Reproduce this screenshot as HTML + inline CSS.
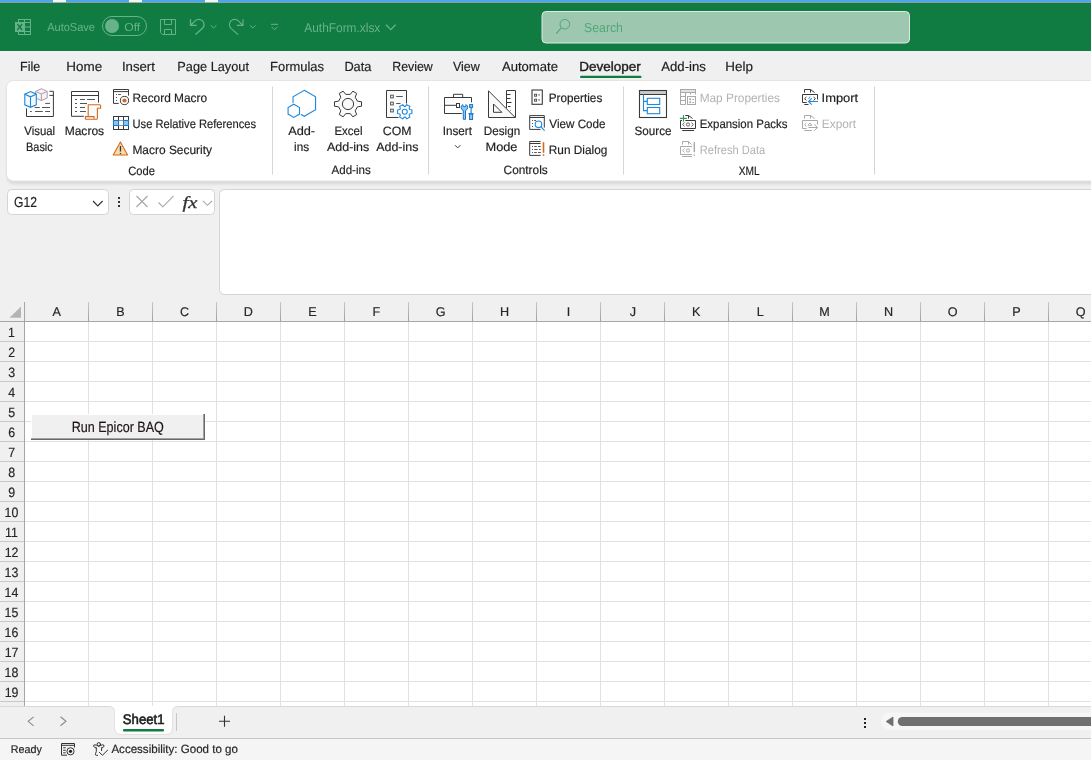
<!DOCTYPE html>
<html><head><meta charset="utf-8"><style>
html,body{margin:0;padding:0;width:1091px;height:760px;overflow:hidden;background:#F0F0F0;}
svg{display:block;will-change:transform;}
</style></head><body>
<svg width="1091" height="760" viewBox="0 0 1091 760" text-rendering="geometricPrecision">
<defs><linearGradient id="hsep" x1="0" y1="0" x2="0" y2="1"><stop offset="0" stop-color="#C8C8C8"/><stop offset="1" stop-color="#A0A0A0"/></linearGradient><linearGradient id="rsh" x1="0" y1="0" x2="0" y2="1"><stop offset="0" stop-color="#000" stop-opacity="0.09"/><stop offset="1" stop-color="#000" stop-opacity="0"/></linearGradient><filter id="blr" x="-5%" y="-20%" width="110%" height="140%"><feGaussianBlur stdDeviation="1.6"/></filter></defs>
<rect x="0" y="0" width="1091" height="760" fill="#F0F0F0"/>
<rect x="0" y="0" width="1091" height="2.2" fill="#4EA5EC"/>
<rect x="0" y="2.2" width="1091" height="1" fill="#7a8f88"/>
<rect x="53" y="0" width="13" height="2.2" fill="#F4F4F4"/>
<rect x="129" y="0" width="13" height="2.2" fill="#F4F4F4"/>
<rect x="205" y="0" width="13" height="2.2" fill="#F4F4F4"/>
<rect x="0" y="3" width="1091" height="48" fill="#107C41"/>
<rect x="7" y="84" width="1100" height="100" rx="7" fill="#000" opacity="0.10" filter="url(#blr)"/>
<rect x="6.5" y="80.5" width="1100" height="100.5" rx="7" fill="#FFFFFF" stroke="#E4E4E4" stroke-width="1"/>
<rect x="7.5" y="189.5" width="101" height="25" rx="4" fill="#FFFFFF" stroke="#D4D4D4"/>
<rect x="129.5" y="189.5" width="85" height="25" rx="4" fill="#FFFFFF" stroke="#D4D4D4"/>
<rect x="219.5" y="189.5" width="900" height="105" rx="5" fill="#FFFFFF" stroke="#D4D4D4"/>
<rect x="25" y="322" width="1066" height="384" fill="#FFFFFF"/>
<rect x="88" y="322" width="1" height="384" fill="#E1E1E1"/>
<rect x="152" y="322" width="1" height="384" fill="#E1E1E1"/>
<rect x="216" y="322" width="1" height="384" fill="#E1E1E1"/>
<rect x="280" y="322" width="1" height="384" fill="#E1E1E1"/>
<rect x="344" y="322" width="1" height="384" fill="#E1E1E1"/>
<rect x="408" y="322" width="1" height="384" fill="#E1E1E1"/>
<rect x="472" y="322" width="1" height="384" fill="#E1E1E1"/>
<rect x="536" y="322" width="1" height="384" fill="#E1E1E1"/>
<rect x="600" y="322" width="1" height="384" fill="#E1E1E1"/>
<rect x="664" y="322" width="1" height="384" fill="#E1E1E1"/>
<rect x="728" y="322" width="1" height="384" fill="#E1E1E1"/>
<rect x="792" y="322" width="1" height="384" fill="#E1E1E1"/>
<rect x="856" y="322" width="1" height="384" fill="#E1E1E1"/>
<rect x="920" y="322" width="1" height="384" fill="#E1E1E1"/>
<rect x="984" y="322" width="1" height="384" fill="#E1E1E1"/>
<rect x="1048" y="322" width="1" height="384" fill="#E1E1E1"/>
<rect x="1112" y="322" width="1" height="384" fill="#E1E1E1"/>
<rect x="25" y="341" width="1066" height="1" fill="#E1E1E1"/>
<rect x="25" y="361" width="1066" height="1" fill="#E1E1E1"/>
<rect x="25" y="381" width="1066" height="1" fill="#E1E1E1"/>
<rect x="25" y="401" width="1066" height="1" fill="#E1E1E1"/>
<rect x="25" y="421" width="1066" height="1" fill="#E1E1E1"/>
<rect x="25" y="441" width="1066" height="1" fill="#E1E1E1"/>
<rect x="25" y="461" width="1066" height="1" fill="#E1E1E1"/>
<rect x="25" y="481" width="1066" height="1" fill="#E1E1E1"/>
<rect x="25" y="501" width="1066" height="1" fill="#E1E1E1"/>
<rect x="25" y="521" width="1066" height="1" fill="#E1E1E1"/>
<rect x="25" y="541" width="1066" height="1" fill="#E1E1E1"/>
<rect x="25" y="561" width="1066" height="1" fill="#E1E1E1"/>
<rect x="25" y="581" width="1066" height="1" fill="#E1E1E1"/>
<rect x="25" y="601" width="1066" height="1" fill="#E1E1E1"/>
<rect x="25" y="621" width="1066" height="1" fill="#E1E1E1"/>
<rect x="25" y="641" width="1066" height="1" fill="#E1E1E1"/>
<rect x="25" y="661" width="1066" height="1" fill="#E1E1E1"/>
<rect x="25" y="681" width="1066" height="1" fill="#E1E1E1"/>
<rect x="25" y="701" width="1066" height="1" fill="#E1E1E1"/>
<rect x="88" y="302" width="1" height="19" fill="url(#hsep)"/>
<rect x="152" y="302" width="1" height="19" fill="url(#hsep)"/>
<rect x="216" y="302" width="1" height="19" fill="url(#hsep)"/>
<rect x="280" y="302" width="1" height="19" fill="url(#hsep)"/>
<rect x="344" y="302" width="1" height="19" fill="url(#hsep)"/>
<rect x="408" y="302" width="1" height="19" fill="url(#hsep)"/>
<rect x="472" y="302" width="1" height="19" fill="url(#hsep)"/>
<rect x="536" y="302" width="1" height="19" fill="url(#hsep)"/>
<rect x="600" y="302" width="1" height="19" fill="url(#hsep)"/>
<rect x="664" y="302" width="1" height="19" fill="url(#hsep)"/>
<rect x="728" y="302" width="1" height="19" fill="url(#hsep)"/>
<rect x="792" y="302" width="1" height="19" fill="url(#hsep)"/>
<rect x="856" y="302" width="1" height="19" fill="url(#hsep)"/>
<rect x="920" y="302" width="1" height="19" fill="url(#hsep)"/>
<rect x="984" y="302" width="1" height="19" fill="url(#hsep)"/>
<rect x="1048" y="302" width="1" height="19" fill="url(#hsep)"/>
<rect x="1112" y="302" width="1" height="19" fill="url(#hsep)"/>
<rect x="0" y="341" width="24" height="1" fill="#C8C8C8"/>
<rect x="0" y="361" width="24" height="1" fill="#C8C8C8"/>
<rect x="0" y="381" width="24" height="1" fill="#C8C8C8"/>
<rect x="0" y="401" width="24" height="1" fill="#C8C8C8"/>
<rect x="0" y="421" width="24" height="1" fill="#C8C8C8"/>
<rect x="0" y="441" width="24" height="1" fill="#C8C8C8"/>
<rect x="0" y="461" width="24" height="1" fill="#C8C8C8"/>
<rect x="0" y="481" width="24" height="1" fill="#C8C8C8"/>
<rect x="0" y="501" width="24" height="1" fill="#C8C8C8"/>
<rect x="0" y="521" width="24" height="1" fill="#C8C8C8"/>
<rect x="0" y="541" width="24" height="1" fill="#C8C8C8"/>
<rect x="0" y="561" width="24" height="1" fill="#C8C8C8"/>
<rect x="0" y="581" width="24" height="1" fill="#C8C8C8"/>
<rect x="0" y="601" width="24" height="1" fill="#C8C8C8"/>
<rect x="0" y="621" width="24" height="1" fill="#C8C8C8"/>
<rect x="0" y="641" width="24" height="1" fill="#C8C8C8"/>
<rect x="0" y="661" width="24" height="1" fill="#C8C8C8"/>
<rect x="0" y="681" width="24" height="1" fill="#C8C8C8"/>
<rect x="0" y="701" width="24" height="1" fill="#C8C8C8"/>
<rect x="0" y="321" width="1091" height="1" fill="#A6A6A6"/>
<rect x="24" y="302" width="1" height="404" fill="#A6A6A6"/>
<path d="M9.5 317.8 L21 317.8 L21 306.5 Z" fill="#B4B4B4"/>
<rect x="0" y="706" width="1091" height="32" fill="#F0F0F0"/>
<rect x="0" y="706" width="1091" height="1" fill="#D9D9D9"/>
<rect x="0" y="738" width="1091" height="1" fill="#C6C6C6"/>
<rect x="0" y="739" width="1091" height="21" fill="#F5F5F5"/>
<g fill="none" stroke="#66B38A" stroke-width="1"><rect x="18.5" y="19.5" width="12" height="15"/><line x1="24.5" y1="19.5" x2="24.5" y2="34.5"/><line x1="18.5" y1="22.5" x2="30.5" y2="22.5"/><line x1="24.5" y1="27" x2="30.5" y2="27"/><line x1="18.5" y1="31.5" x2="30.5" y2="31.5"/></g>
<rect x="15" y="22" width="9.5" height="10" fill="#66B38A"/>
<path d="M17.3 24 L22.2 30 M22.2 24 L17.3 30" stroke="#107C41" stroke-width="1.3"/>
<rect x="102.5" y="16.5" width="44" height="19" rx="9.5" fill="none" stroke="#66B38A" stroke-width="1"/>
<circle cx="112" cy="26" r="7" fill="#66B38A"/>
<g fill="none" stroke="#66B38A" stroke-width="1"><path d="M160.5 19.5 H175.5 V34.5 H162.5 L160.5 32.5 Z"/><path d="M164.5 19.5 V24.5 H171.5 V19.5"/><path d="M164.5 34.5 V29.5 H171.5 V34.5"/></g>
<path d="M190.5 19.2 V25.4 H196.7 M190.9 25 L195.1 20.9 A5.2 5.2 0 0 1 202.5 28.3 L195.4 34.6" fill="none" stroke="#66B38A" stroke-width="1.3"/>
<g transform="translate(433.5,0) scale(-1,1)"><path d="M190.5 19.2 V25.4 H196.7 M190.9 25 L195.1 20.9 A5.2 5.2 0 0 1 202.5 28.3 L195.4 34.6" fill="none" stroke="#66B38A" stroke-width="1.1"/></g>
<path d="M210.8 25.3 L213.60000000000002 28 L216.4 25.3" fill="none" stroke="#66B38A" stroke-width="1"/>
<path d="M250 25.3 L252.8 28 L255.6 25.3" fill="none" stroke="#66B38A" stroke-width="1"/>
<path d="M271 24.3 H278 M271.5 26.8 L274.5 29.8 L277.5 26.8" fill="none" stroke="#66B38A" stroke-width="1"/>
<path d="M386 24.8 L390.8 29.6 L395.6 24.8" fill="none" stroke="#66B38A" stroke-width="1.3"/>
<rect x="542" y="11.5" width="367.5" height="31.5" rx="4" fill="#9EC7B0" stroke="#DDEBE3" stroke-width="1"/>
<circle cx="564.8" cy="24.2" r="4.8" fill="none" stroke="#4FA877" stroke-width="1"/>
<line x1="561.4" y1="27.6" x2="556.3" y2="33.7" stroke="#4FA877" stroke-width="1.1"/>
<g fill="none" stroke="#3A3A3A" stroke-width="1"><path d="M49.4 91.3 H53.4 V116.5 H26.5 V108.4"/><line x1="49.4" y1="95.4" x2="53.4" y2="95.4"/></g>
<g stroke="#555" stroke-width="1"><line x1="45.2" y1="103.4" x2="50" y2="103.4"/><line x1="34.7" y1="107.5" x2="39.8" y2="107.5"/><line x1="42" y1="107.5" x2="50" y2="107.5"/><line x1="30" y1="111.5" x2="31.8" y2="111.5"/><line x1="35" y1="111.5" x2="42.8" y2="111.5"/><line x1="45.2" y1="111.5" x2="50" y2="111.5"/></g>
<g fill="#F6F4F6" stroke="#A99BAD" stroke-width="1"><path d="M41.4 88.7 L47.2 91.4 V98 L41.4 100.6 L35.6 98 V91.4 Z"/><path d="M35.6 91.4 L41.4 94 L47.2 91.4 M41.4 94 V100.6"/></g>
<g fill="#F4F9FE" stroke="#1E88DC" stroke-width="1.1"><path d="M30.5 91.6 L36.3 94.2 V104.8 L30.5 107.3 L24.8 104.8 V94.2 Z"/><path d="M24.8 94.2 L30.5 96.8 L36.3 94.2 M30.5 96.8 V107.3"/></g>
<g fill="none" stroke="#3A3A3A" stroke-width="1"><path d="M83.8 116.3 H71.5 V91.5 H98.5 V102.6"/><line x1="71.5" y1="95.5" x2="98.5" y2="95.5"/></g>
<g stroke="#555" stroke-width="1"><line x1="75" y1="99.5" x2="77" y2="99.5"/><line x1="80" y1="99.5" x2="85" y2="99.5"/><line x1="87" y1="99.5" x2="95" y2="99.5"/><line x1="75" y1="103.5" x2="77" y2="103.5"/><line x1="80" y1="103.5" x2="87" y2="103.5"/><line x1="75" y1="107.5" x2="77" y2="107.5"/><line x1="80" y1="107.5" x2="85" y2="107.5"/><line x1="75" y1="111.5" x2="77" y2="111.5"/><line x1="80" y1="111.5" x2="86" y2="111.5"/></g>
<g fill="#FAFAFA" stroke="#D3691F" stroke-width="1.1"><path d="M88.2 104.8 H99.8 A1 1 0 0 1 100.6 105.6 V108.2 H97.4 V118.6 A0.8 0.8 0 0 1 96.6 119.2 H86 A0.8 0.8 0 0 1 85.4 118.4 V116.6 H88.2 Z"/><path d="M88.2 116.6 H94 V119.2"/></g>
<g fill="none" stroke="#3A3A3A" stroke-width="1"><path d="M118.7 103.4 H113.5 V89.5 H128.5 V95.6"/><line x1="113.5" y1="91.6" x2="128.5" y2="91.6"/><circle cx="124.5" cy="100.5" r="4.1"/></g>
<circle cx="124.5" cy="100.5" r="2.1" fill="#D3691F"/>
<g fill="#555"><rect x="116" y="94" width="1" height="1"/><rect x="116" y="97" width="1" height="1"/><rect x="116" y="100" width="1" height="1"/><rect x="118.2" y="94" width="2.7" height="1"/></g>
<rect x="113.5" y="120.4" width="5" height="5.1" fill="#8CC8EE"/><rect x="123.5" y="120.4" width="5" height="5.1" fill="#8CC8EE"/>
<g fill="none" stroke="#3A3A3A" stroke-width="1"><rect x="113.5" y="116.5" width="15" height="13"/><line x1="118.5" y1="116.5" x2="118.5" y2="129.5"/><line x1="123.5" y1="116.5" x2="123.5" y2="129.5"/></g>
<g fill="none" stroke="#1E78C8" stroke-width="1.1"><rect x="113.5" y="120.5" width="5" height="5"/><rect x="123.5" y="120.5" width="5" height="5"/></g>
<g stroke="#777" stroke-width="0.8"><line x1="118.5" y1="120.5" x2="123.5" y2="120.5"/><line x1="118.5" y1="125.5" x2="123.5" y2="125.5"/></g>
<path d="M120.4 142 L127.6 155 H113.2 Z" fill="#F7DCA9" stroke="#D3691F" stroke-width="1.1" stroke-linejoin="round"/>
<rect x="119.8" y="146" width="1.3" height="5.5" fill="#333"/><rect x="119.8" y="153" width="1.3" height="1.1" fill="#333"/>
<path d="M304.30 90.30 L315.56 96.80 L315.56 109.80 L304.30 116.30 L293.04 109.80 L293.04 96.80 Z" fill="none" stroke="#1E88DC" stroke-width="1.1"/>
<path d="M293.80 104.20 L299.52 107.50 L299.52 114.10 L293.80 117.40 L288.08 114.10 L288.08 107.50 Z" fill="#FFFFFF" stroke="#FFFFFF" stroke-width="3"/>
<path d="M293.80 104.20 L299.52 107.50 L299.52 114.10 L293.80 117.40 L288.08 114.10 L288.08 107.50 Z" fill="#FFFFFF" stroke="#1E88DC" stroke-width="1.1"/>
<path d="M357.49 101.19 L361.51 101.74 L361.51 106.26 L357.49 106.81 L355.18 110.81 L356.71 114.57 L352.80 116.83 L350.31 113.63 L345.69 113.63 L343.20 116.83 L339.29 114.57 L340.82 110.81 L338.51 106.81 L334.49 106.26 L334.49 101.74 L338.51 101.19 L340.82 97.19 L339.29 93.43 L343.20 91.17 L345.69 94.37 L350.31 94.37 L352.80 91.17 L356.71 93.43 L355.18 97.19 Z" fill="#FAFAFA" stroke="#3A3A3A" stroke-width="1" stroke-linejoin="miter"/>
<circle cx="348" cy="104" r="5.6" fill="none" stroke="#3A3A3A" stroke-width="1"/>
<path d="M398.5 117.5 H386.5 V90.5 H406.5 V103.5" fill="#FAFAFA" stroke="#3A3A3A" stroke-width="1"/>
<g fill="none" stroke="#555" stroke-width="1"><rect x="390.6" y="95.2" width="2.7" height="2.7"/><rect x="390.6" y="102.2" width="2.7" height="2.7"/><rect x="390.6" y="109.2" width="2.7" height="2.7"/><line x1="396.2" y1="96.5" x2="402.8" y2="96.5"/><line x1="396.2" y1="103.5" x2="400.5" y2="103.5"/></g>
<path d="M409.68 109.55 L411.93 109.96 L411.93 113.54 L409.68 113.95 L409.12 114.92 L409.89 117.07 L406.79 118.86 L405.31 117.12 L404.19 117.12 L402.71 118.86 L399.61 117.07 L400.38 114.92 L399.82 113.95 L397.57 113.54 L397.57 109.96 L399.82 109.55 L400.38 108.58 L399.61 106.43 L402.71 104.64 L404.19 106.38 L405.31 106.38 L406.79 104.64 L409.89 106.43 L409.12 108.58 Z" fill="#FFFFFF" stroke="#1E88DC" stroke-width="1.1" stroke-linejoin="round"/>
<circle cx="404.75" cy="111.75" r="2.5" fill="none" stroke="#1E88DC" stroke-width="1.1"/>
<g fill="none" stroke="#3A3A3A" stroke-width="1"><path d="M461.8 113.5 H444.5 V97.5 H471.5 V102.3"/><path d="M453.5 97.5 V94.3 H462.7 V97.5"/><path d="M444.5 105.3 H456.5"/><rect x="456.5" y="103.5" width="3" height="4"/></g>
<path d="M462.75 104.54 A3.3 3.3 0 0 0 463.27 110.5 V119.3 H465.53 V110.5 A3.3 3.3 0 0 0 466.05 104.54 L465.5 106.6 H463.3 Z" fill="#8CC8F0" stroke="#1A73C8" stroke-width="1" stroke-linejoin="round"/>
<g fill="#8CC8F0" stroke="#1A73C8" stroke-width="1"><rect x="469.6" y="104.6" width="3" height="2.8"/><rect x="469.6" y="114" width="3" height="5.5"/></g>
<path d="M471.1 107.4 V114 M468.3 113.8 H473.8" stroke="#1A73C8" stroke-width="1.1"/>
<path d="M455 145.2 L457.7 147.9 L460.4 145.2" fill="none" stroke="#3A3A3A" stroke-width="1"/>
<g fill="none" stroke="#3A3A3A" stroke-width="1"><path d="M506.5 108 V90.5 H515.5 V117.5"/><path d="M488.5 90.8 V117.5 H515.2 Z" fill="#FAFAFA"/><path d="M493.5 104 V112.3 H501.8 Z"/><line x1="506.5" y1="94.5" x2="510.5" y2="94.5"/><line x1="506.5" y1="98.5" x2="510.5" y2="98.5"/><line x1="506.5" y1="102.5" x2="511.5" y2="102.5"/><line x1="508" y1="106.5" x2="510.5" y2="106.5"/><line x1="510" y1="110.5" x2="510.5" y2="110.5"/></g>
<rect x="532" y="90" width="10.3" height="14.3" fill="none" stroke="#3A3A3A" stroke-width="1.1"/>
<g fill="none" stroke="#444" stroke-width="0.9"><rect x="534.6" y="94.2" width="2" height="2"/><rect x="534.6" y="99.2" width="2" height="2"/></g>
<g stroke="#444" stroke-width="0.9"><line x1="538.2" y1="94.9" x2="540" y2="94.9"/><line x1="538.2" y1="99.9" x2="540" y2="99.9"/></g>
<g fill="none" stroke="#3A3A3A" stroke-width="1"><path d="M540.5 129.4 H529.7 V115.6 H544.3 V127.6"/><line x1="529.7" y1="117.5" x2="544.3" y2="117.5"/></g>
<g fill="#555"><rect x="532" y="120" width="1" height="1"/><rect x="532" y="123" width="1" height="1"/><rect x="532" y="126" width="1" height="1"/><rect x="534.2" y="120" width="1.8" height="1"/></g>
<circle cx="538.5" cy="124.3" r="3.3" fill="#FFFFFF" stroke="#1E88DC" stroke-width="1.1"/>
<line x1="540.8" y1="126.6" x2="544.6" y2="130.6" stroke="#1E88DC" stroke-width="1.1"/>
<g fill="none" stroke="#3A3A3A" stroke-width="1"><path d="M540.6 141.5 H529.7 V155.4 H540.6 M529.7 143.5 H540.6"/></g>
<g fill="#555"><rect x="532" y="146" width="1" height="1"/><rect x="532" y="149" width="1" height="1"/><rect x="532" y="152" width="1" height="1"/><rect x="534.2" y="146" width="2.6" height="1"/><rect x="538" y="146" width="2.8" height="1"/><rect x="534.2" y="149" width="3.4" height="1"/><rect x="539" y="149" width="1.8" height="1"/><rect x="534.2" y="152" width="2.6" height="1"/><rect x="538" y="152" width="2.8" height="1"/></g>
<rect x="542.7" y="142.2" width="1.6" height="10.6" fill="#D3691F"/><rect x="542.7" y="154.2" width="1.6" height="1.6" fill="#D3691F"/>
<rect x="639.5" y="90.5" width="27" height="4" fill="#C9C9C9"/>
<rect x="639.5" y="90.5" width="27" height="27" fill="none" stroke="#3A3A3A" stroke-width="1.1"/>
<line x1="639.5" y1="94.5" x2="666.5" y2="94.5" stroke="#3A3A3A" stroke-width="1"/>
<g fill="none" stroke="#1E88DC" stroke-width="1.1"><path d="M643.5 94.5 V110.6 H647.3 M643.5 101.4 H647.3"/><rect x="647.3" y="98.3" width="12.4" height="6.2"/><rect x="647.3" y="107.5" width="12.4" height="6.2"/></g>
<g fill="none" stroke="#A9A9A9" stroke-width="1"><rect x="680.5" y="89.5" width="15" height="3" fill="#E3E3E3"/><path d="M695.5 92.5 V94.5 M690.5 92.5 V94.5 M685.5 92.5 V104.5 H680.5 V92.5 M680.5 96.5 H685.5 M680.5 100.5 H685.5"/><rect x="687.5" y="96.5" width="8" height="8"/></g>
<g fill="#A9A9A9"><rect x="689.3" y="98.3" width="1.8" height="1.8"/><rect x="689.3" y="101.3" width="1.8" height="1.8"/><rect x="692.3" y="99" width="1.8" height="1"/><rect x="692.3" y="102" width="1.8" height="1"/></g>
<g fill="none" stroke="#3A3A3A" stroke-width="1"><path d="M685.3 115.5 H688.5 L692.5 118.5 M688.5 115.5 V118.6"/><path d="M682 120.5 H680.5 V128.5 H695.5 V120.5 H685.3"/><line x1="682.2" y1="130.5" x2="694" y2="130.5"/></g>
<g fill="none" stroke="#666" stroke-width="1"><path d="M684.6 122.6 L682.6 124.5 L684.6 126.4 M691.4 122.6 L693.4 124.5 L691.4 126.4"/><circle cx="688" cy="124.5" r="1.6"/></g>
<path d="M683.5 115 V121.7 M679.8 118.4 H686.9" stroke="#2EA05A" stroke-width="1.1"/>
<g fill="none" stroke="#A9A9A9" stroke-width="1"><path d="M682.5 144.5 V141.5 H688.5 L691.5 144.5 M688.5 141.5 V144.5"/><path d="M692 146.5 H680.5 V154.5 H692"/><line x1="682.2" y1="156.5" x2="692" y2="156.5"/><path d="M684.6 148.6 L682.6 150.5 L684.6 152.4"/><circle cx="688" cy="150.5" r="1.6"/></g>
<rect x="693.6" y="142.2" width="1.4" height="10" fill="#A9A9A9"/><rect x="693.6" y="154.5" width="1.4" height="1.4" fill="#A9A9A9"/>
<g fill="none" stroke="#3A3A3A" stroke-width="1"><path d="M804.5 92.6 V89.5 H810.5 L814.6 92.6 M810.5 89.5 V92.6"/><path d="M806.6 102.5 H802.5 V94.5 H817.5 V99.5"/><line x1="804.3" y1="104.5" x2="808.5" y2="104.5"/><path d="M806.4 97 L804.6 98.7 L806.4 100.4 M813.6 97 L815.4 98.7 L813.6 100.4"/></g>
<path d="M810 96.5 L808.6 99" stroke="#888" stroke-width="1"/>
<path d="M818 101.5 H808.8 M811.7 98.4 L808.6 101.5 L811.7 104.6" fill="none" stroke="#1E88DC" stroke-width="1.1"/>
<g fill="none" stroke="#A9A9A9" stroke-width="1"><path d="M804.5 118.6 V115.5 H810.5 L814.6 118.6 M810.5 115.5 V118.6"/><path d="M806.6 128.5 H802.5 V120.5 H817.5 V124.5"/><line x1="804.3" y1="130.5" x2="811.8" y2="130.5"/><path d="M806.4 123 L804.6 124.7 L806.4 126.4"/><path d="M808.4 124.6 A1.7 1.7 0 0 1 811.6 124.6 V125.4 H808.4 Z"/><path d="M808.4 127.5 H817.3 M814.3 124.3 L817.5 127.5 L814.3 130.7"/></g>
<rect x="272.0" y="86.5" width="1" height="88" fill="#D6D6D6"/>
<rect x="428.0" y="86.5" width="1" height="88" fill="#D6D6D6"/>
<rect x="623.0" y="86.5" width="1" height="88" fill="#D6D6D6"/>
<rect x="874.0" y="86.5" width="1" height="88" fill="#D6D6D6"/>
<rect x="580" y="75.8" width="61.5" height="2.2" rx="1.1" fill="#107C41"/>
<path d="M93 201 L97.8 205.8 L102.6 201" fill="none" stroke="#333" stroke-width="1.2"/>
<g fill="#333"><rect x="118" y="197" width="2" height="2"/><rect x="118" y="201" width="2" height="2"/><rect x="118" y="205" width="2" height="2"/></g>
<path d="M136.5 196 L147.5 207 M147.5 196 L136.5 207" stroke="#A6A6A6" stroke-width="1.1"/>
<path d="M158.5 202.5 L162.8 206.8 L173.5 196.2" fill="none" stroke="#A6A6A6" stroke-width="1.1"/>
<path d="M203 200.8 L207.5 205.3 L212 200.8" fill="none" stroke="#A6A6A6" stroke-width="1.1"/>
<path d="M28.6 716.8 L34 721.3 L28.6 725.8" transform="translate(62.2,0) scale(-1,1)" fill="none" stroke="#8A8A8A" stroke-width="1.1"/>
<path d="M60.5 716.8 L66 721.3 L60.5 725.8" fill="none" stroke="#8A8A8A" stroke-width="1.1"/>
<path d="M224.5 715.8 V726.8 M219 721.3 H230" stroke="#333" stroke-width="1.1"/>
<g fill="#222"><rect x="864" y="718" width="2" height="2"/><rect x="864" y="722" width="2" height="2"/><rect x="864" y="726" width="2" height="2"/></g>
<rect x="881" y="712.8" width="230" height="17" rx="8.5" fill="#F6F6F6"/>
<path d="M893 717 V726 L886.2 721.5 Z" fill="#6F6F6F" stroke="#6F6F6F" stroke-width="0.8" stroke-linejoin="round"/>
<rect x="897.8" y="717" width="220" height="9" rx="4.5" fill="#6F6F6F"/>
<g fill="none" stroke="#333" stroke-width="1"><path d="M67 755.2 H61.5 V743.5 H74.5 V747.5"/><line x1="61.5" y1="745.3" x2="74.5" y2="745.3"/></g>
<g fill="#333"><rect x="63.2" y="747.3" width="2.5" height="1"/><rect x="63.2" y="749.8" width="2.5" height="1"/><rect x="63.2" y="752.3" width="2.5" height="1"/></g>
<circle cx="70.5" cy="751.3" r="3.6" fill="#F3F3F3" stroke="#333" stroke-width="1"/><circle cx="70.5" cy="751.3" r="1.6" fill="#222"/>
<g fill="none" stroke="#333" stroke-width="1" stroke-linecap="round" stroke-linejoin="round"><circle cx="98.8" cy="744.3" r="1.7"/><path d="M96.3 748 Q94 747.6 93.6 746.1 Q93.5 744.7 94.9 744.8 Q96.6 745.1 98.8 746.3 Q101 745.1 102.7 744.8 Q104.1 744.7 104 746.1 Q103.7 747.6 101.6 748"/><path d="M96.3 748 V751.6 Q95.3 753.6 95.5 754.9 Q95.9 755.6 97.6 755.4"/><path d="M101.6 748 V750.6"/><path d="M99.4 752.3 L102.4 755.3 L107.6 750.2"/></g>
<text x="47.20" y="31.00" font-size="11.59" textLength="47.81" lengthAdjust="spacingAndGlyphs" fill="#68B28A" font-family='"Liberation Sans", sans-serif' font-style="normal" font-weight="normal" >AutoSave</text>
<text x="124.15" y="31.00" font-size="11.59" textLength="16.09" lengthAdjust="spacingAndGlyphs" fill="#68B28A" font-family='"Liberation Sans", sans-serif' font-style="normal" font-weight="normal" >Off</text>
<text x="304.30" y="31.90" font-size="12.75" textLength="76.02" lengthAdjust="spacingAndGlyphs" fill="#68B28A" font-family='"Liberation Sans", sans-serif' font-style="normal" font-weight="normal" >AuthForm.xlsx</text>
<text x="584.05" y="31.80" font-size="13.04" textLength="38.89" lengthAdjust="spacingAndGlyphs" fill="#4FA877" font-family='"Liberation Sans", sans-serif' font-style="normal" font-weight="normal" >Search</text>
<text x="20.10" y="71.00" font-size="13.19" textLength="20.18" lengthAdjust="spacingAndGlyphs" fill="#1E1E1E" font-family='"Liberation Sans", sans-serif' font-style="normal" font-weight="normal" stroke="#1E1E1E" stroke-width="0.18">File</text>
<text x="66.32" y="71.00" font-size="13.19" textLength="35.92" lengthAdjust="spacingAndGlyphs" fill="#1E1E1E" font-family='"Liberation Sans", sans-serif' font-style="normal" font-weight="normal" stroke="#1E1E1E" stroke-width="0.18">Home</text>
<text x="121.91" y="71.00" font-size="13.19" textLength="32.97" lengthAdjust="spacingAndGlyphs" fill="#1E1E1E" font-family='"Liberation Sans", sans-serif' font-style="normal" font-weight="normal" stroke="#1E1E1E" stroke-width="0.18">Insert</text>
<text x="177.28" y="71.00" font-size="13.19" textLength="71.70" lengthAdjust="spacingAndGlyphs" fill="#1E1E1E" font-family='"Liberation Sans", sans-serif' font-style="normal" font-weight="normal" stroke="#1E1E1E" stroke-width="0.18">Page Layout</text>
<text x="270.06" y="71.00" font-size="13.19" textLength="53.96" lengthAdjust="spacingAndGlyphs" fill="#1E1E1E" font-family='"Liberation Sans", sans-serif' font-style="normal" font-weight="normal" stroke="#1E1E1E" stroke-width="0.18">Formulas</text>
<text x="344.38" y="71.00" font-size="13.19" textLength="27.05" lengthAdjust="spacingAndGlyphs" fill="#1E1E1E" font-family='"Liberation Sans", sans-serif' font-style="normal" font-weight="normal" stroke="#1E1E1E" stroke-width="0.18">Data</text>
<text x="392.21" y="71.00" font-size="13.19" textLength="40.58" lengthAdjust="spacingAndGlyphs" fill="#1E1E1E" font-family='"Liberation Sans", sans-serif' font-style="normal" font-weight="normal" stroke="#1E1E1E" stroke-width="0.18">Review</text>
<text x="452.94" y="71.00" font-size="13.19" textLength="26.86" lengthAdjust="spacingAndGlyphs" fill="#1E1E1E" font-family='"Liberation Sans", sans-serif' font-style="normal" font-weight="normal" stroke="#1E1E1E" stroke-width="0.18">View</text>
<text x="501.90" y="71.00" font-size="13.19" textLength="56.09" lengthAdjust="spacingAndGlyphs" fill="#1E1E1E" font-family='"Liberation Sans", sans-serif' font-style="normal" font-weight="normal" stroke="#1E1E1E" stroke-width="0.18">Automate</text>
<text x="661.30" y="71.00" font-size="13.19" textLength="44.57" lengthAdjust="spacingAndGlyphs" fill="#1E1E1E" font-family='"Liberation Sans", sans-serif' font-style="normal" font-weight="normal" stroke="#1E1E1E" stroke-width="0.18">Add-ins</text>
<text x="725.33" y="71.00" font-size="13.19" textLength="27.64" lengthAdjust="spacingAndGlyphs" fill="#1E1E1E" font-family='"Liberation Sans", sans-serif' font-style="normal" font-weight="normal" stroke="#1E1E1E" stroke-width="0.18">Help</text>
<text x="579.32" y="71.00" font-size="13.19" textLength="61.42" lengthAdjust="spacingAndGlyphs" fill="#1E1E1E" font-family='"Liberation Sans", sans-serif' font-style="normal" font-weight="normal" stroke="#1E1E1E" stroke-width="0.4">Developer</text>
<text x="24.34" y="134.75" font-size="12.17" textLength="30.80" lengthAdjust="spacingAndGlyphs" fill="#1E1E1E" font-family='"Liberation Sans", sans-serif' font-style="normal" font-weight="normal" stroke="#1E1E1E" stroke-width="0.18">Visual</text>
<text x="26.02" y="150.60" font-size="12.17" textLength="26.75" lengthAdjust="spacingAndGlyphs" fill="#1E1E1E" font-family='"Liberation Sans", sans-serif' font-style="normal" font-weight="normal" stroke="#1E1E1E" stroke-width="0.18">Basic</text>
<text x="64.64" y="134.75" font-size="12.17" textLength="39.52" lengthAdjust="spacingAndGlyphs" fill="#1E1E1E" font-family='"Liberation Sans", sans-serif' font-style="normal" font-weight="normal" stroke="#1E1E1E" stroke-width="0.18">Macros</text>
<text x="132.45" y="101.80" font-size="12.17" textLength="74.63" lengthAdjust="spacingAndGlyphs" fill="#1E1E1E" font-family='"Liberation Sans", sans-serif' font-style="normal" font-weight="normal" stroke="#1E1E1E" stroke-width="0.18">Record Macro</text>
<text x="132.56" y="127.80" font-size="12.17" textLength="123.54" lengthAdjust="spacingAndGlyphs" fill="#1E1E1E" font-family='"Liberation Sans", sans-serif' font-style="normal" font-weight="normal" stroke="#1E1E1E" stroke-width="0.18">Use Relative References</text>
<text x="132.45" y="153.60" font-size="12.17" textLength="79.54" lengthAdjust="spacingAndGlyphs" fill="#1E1E1E" font-family='"Liberation Sans", sans-serif' font-style="normal" font-weight="normal" stroke="#1E1E1E" stroke-width="0.18">Macro Security</text>
<text x="128.14" y="175.00" font-size="12.17" textLength="26.77" lengthAdjust="spacingAndGlyphs" fill="#1E1E1E" font-family='"Liberation Sans", sans-serif' font-style="normal" font-weight="normal" stroke="#1E1E1E" stroke-width="0.18">Code</text>
<text x="288.20" y="134.90" font-size="12.17" textLength="26.94" lengthAdjust="spacingAndGlyphs" fill="#1E1E1E" font-family='"Liberation Sans", sans-serif' font-style="normal" font-weight="normal" stroke="#1E1E1E" stroke-width="0.18">Add-</text>
<text x="294.03" y="150.70" font-size="12.17" textLength="15.06" lengthAdjust="spacingAndGlyphs" fill="#1E1E1E" font-family='"Liberation Sans", sans-serif' font-style="normal" font-weight="normal" stroke="#1E1E1E" stroke-width="0.18">ins</text>
<text x="334.48" y="134.90" font-size="12.17" textLength="28.07" lengthAdjust="spacingAndGlyphs" fill="#1E1E1E" font-family='"Liberation Sans", sans-serif' font-style="normal" font-weight="normal" stroke="#1E1E1E" stroke-width="0.18">Excel</text>
<text x="327.00" y="150.70" font-size="12.17" textLength="42.25" lengthAdjust="spacingAndGlyphs" fill="#1E1E1E" font-family='"Liberation Sans", sans-serif' font-style="normal" font-weight="normal" stroke="#1E1E1E" stroke-width="0.18">Add-ins</text>
<text x="382.88" y="134.90" font-size="12.17" textLength="28.74" lengthAdjust="spacingAndGlyphs" fill="#1E1E1E" font-family='"Liberation Sans", sans-serif' font-style="normal" font-weight="normal" stroke="#1E1E1E" stroke-width="0.18">COM</text>
<text x="376.20" y="150.70" font-size="12.17" textLength="42.25" lengthAdjust="spacingAndGlyphs" fill="#1E1E1E" font-family='"Liberation Sans", sans-serif' font-style="normal" font-weight="normal" stroke="#1E1E1E" stroke-width="0.18">Add-ins</text>
<text x="331.50" y="174.40" font-size="12.17" textLength="39.21" lengthAdjust="spacingAndGlyphs" fill="#1E1E1E" font-family='"Liberation Sans", sans-serif' font-style="normal" font-weight="normal" stroke="#1E1E1E" stroke-width="0.18">Add-ins</text>
<text x="442.70" y="134.75" font-size="12.17" textLength="29.27" lengthAdjust="spacingAndGlyphs" fill="#1E1E1E" font-family='"Liberation Sans", sans-serif' font-style="normal" font-weight="normal" stroke="#1E1E1E" stroke-width="0.18">Insert</text>
<text x="483.82" y="134.75" font-size="12.17" textLength="36.38" lengthAdjust="spacingAndGlyphs" fill="#1E1E1E" font-family='"Liberation Sans", sans-serif' font-style="normal" font-weight="normal" stroke="#1E1E1E" stroke-width="0.18">Design</text>
<text x="485.48" y="150.60" font-size="12.17" textLength="32.02" lengthAdjust="spacingAndGlyphs" fill="#1E1E1E" font-family='"Liberation Sans", sans-serif' font-style="normal" font-weight="normal" stroke="#1E1E1E" stroke-width="0.18">Mode</text>
<text x="503.61" y="174.40" font-size="12.17" textLength="44.09" lengthAdjust="spacingAndGlyphs" fill="#1E1E1E" font-family='"Liberation Sans", sans-serif' font-style="normal" font-weight="normal" stroke="#1E1E1E" stroke-width="0.18">Controls</text>
<text x="548.81" y="101.90" font-size="12.17" textLength="53.47" lengthAdjust="spacingAndGlyphs" fill="#1E1E1E" font-family='"Liberation Sans", sans-serif' font-style="normal" font-weight="normal" stroke="#1E1E1E" stroke-width="0.18">Properties</text>
<text x="549.34" y="127.75" font-size="12.17" textLength="56.22" lengthAdjust="spacingAndGlyphs" fill="#1E1E1E" font-family='"Liberation Sans", sans-serif' font-style="normal" font-weight="normal" stroke="#1E1E1E" stroke-width="0.18">View Code</text>
<text x="548.80" y="153.75" font-size="12.17" textLength="58.49" lengthAdjust="spacingAndGlyphs" fill="#1E1E1E" font-family='"Liberation Sans", sans-serif' font-style="normal" font-weight="normal" stroke="#1E1E1E" stroke-width="0.18">Run Dialog</text>
<text x="634.57" y="134.90" font-size="12.17" textLength="36.99" lengthAdjust="spacingAndGlyphs" fill="#1E1E1E" font-family='"Liberation Sans", sans-serif' font-style="normal" font-weight="normal" stroke="#1E1E1E" stroke-width="0.18">Source</text>
<text x="699.69" y="127.80" font-size="12.17" textLength="87.73" lengthAdjust="spacingAndGlyphs" fill="#1E1E1E" font-family='"Liberation Sans", sans-serif' font-style="normal" font-weight="normal" stroke="#1E1E1E" stroke-width="0.18">Expansion Packs</text>
<text x="738.75" y="175.00" font-size="12.17" textLength="20.87" lengthAdjust="spacingAndGlyphs" fill="#1E1E1E" font-family='"Liberation Sans", sans-serif' font-style="normal" font-weight="normal" stroke="#1E1E1E" stroke-width="0.18">XML</text>
<text x="821.59" y="101.90" font-size="12.17" textLength="36.63" lengthAdjust="spacingAndGlyphs" fill="#1E1E1E" font-family='"Liberation Sans", sans-serif' font-style="normal" font-weight="normal" stroke="#1E1E1E" stroke-width="0.18">Import</text>
<text x="699.65" y="101.80" font-size="12.17" textLength="80.38" lengthAdjust="spacingAndGlyphs" fill="#B2B2B2" font-family='"Liberation Sans", sans-serif' font-style="normal" font-weight="normal" >Map Properties</text>
<text x="699.71" y="153.60" font-size="12.17" textLength="65.51" lengthAdjust="spacingAndGlyphs" fill="#B2B2B2" font-family='"Liberation Sans", sans-serif' font-style="normal" font-weight="normal" >Refresh Data</text>
<text x="821.80" y="127.75" font-size="12.17" textLength="34.32" lengthAdjust="spacingAndGlyphs" fill="#B2B2B2" font-family='"Liberation Sans", sans-serif' font-style="normal" font-weight="normal" >Export</text>
<text x="182.59" y="207.50" font-size="17.00" textLength="14.84" lengthAdjust="spacingAndGlyphs" fill="#333" font-family='"Liberation Serif", serif' font-style="italic" font-weight="normal" stroke="#333" stroke-width="0.3">fx</text>
<text x="13.99" y="207.00" font-size="14.49" textLength="22.91" lengthAdjust="spacingAndGlyphs" fill="#1F1F1F" font-family='"Liberation Sans", sans-serif' font-style="normal" font-weight="normal" stroke="#1F1F1F" stroke-width="0.18">G12</text>
<text x="52.41" y="315.70" font-size="12.61" textLength="8.41" lengthAdjust="spacingAndGlyphs" fill="#262626" font-family='"Liberation Sans", sans-serif' font-style="normal" font-weight="normal" stroke="#262626" stroke-width="0.18">A</text>
<text x="116.22" y="315.70" font-size="12.61" textLength="8.41" lengthAdjust="spacingAndGlyphs" fill="#262626" font-family='"Liberation Sans", sans-serif' font-style="normal" font-weight="normal" stroke="#262626" stroke-width="0.18">B</text>
<text x="179.97" y="315.70" font-size="12.61" textLength="9.11" lengthAdjust="spacingAndGlyphs" fill="#262626" font-family='"Liberation Sans", sans-serif' font-style="normal" font-weight="normal" stroke="#262626" stroke-width="0.18">C</text>
<text x="243.84" y="315.70" font-size="12.61" textLength="9.11" lengthAdjust="spacingAndGlyphs" fill="#262626" font-family='"Liberation Sans", sans-serif' font-style="normal" font-weight="normal" stroke="#262626" stroke-width="0.18">D</text>
<text x="308.16" y="315.70" font-size="12.61" textLength="8.41" lengthAdjust="spacingAndGlyphs" fill="#262626" font-family='"Liberation Sans", sans-serif' font-style="normal" font-weight="normal" stroke="#262626" stroke-width="0.18">E</text>
<text x="372.50" y="315.70" font-size="12.61" textLength="7.70" lengthAdjust="spacingAndGlyphs" fill="#262626" font-family='"Liberation Sans", sans-serif' font-style="normal" font-weight="normal" stroke="#262626" stroke-width="0.18">F</text>
<text x="435.84" y="315.70" font-size="12.61" textLength="9.81" lengthAdjust="spacingAndGlyphs" fill="#262626" font-family='"Liberation Sans", sans-serif' font-style="normal" font-weight="normal" stroke="#262626" stroke-width="0.18">G</text>
<text x="500.06" y="315.70" font-size="12.61" textLength="9.11" lengthAdjust="spacingAndGlyphs" fill="#262626" font-family='"Liberation Sans", sans-serif' font-style="normal" font-weight="normal" stroke="#262626" stroke-width="0.18">H</text>
<text x="566.87" y="315.70" font-size="12.61" textLength="3.50" lengthAdjust="spacingAndGlyphs" fill="#262626" font-family='"Liberation Sans", sans-serif' font-style="normal" font-weight="normal" stroke="#262626" stroke-width="0.18">I</text>
<text x="629.83" y="315.70" font-size="12.61" textLength="6.30" lengthAdjust="spacingAndGlyphs" fill="#262626" font-family='"Liberation Sans", sans-serif' font-style="normal" font-weight="normal" stroke="#262626" stroke-width="0.18">J</text>
<text x="691.97" y="315.70" font-size="12.61" textLength="8.41" lengthAdjust="spacingAndGlyphs" fill="#262626" font-family='"Liberation Sans", sans-serif' font-style="normal" font-weight="normal" stroke="#262626" stroke-width="0.18">K</text>
<text x="756.79" y="315.70" font-size="12.61" textLength="7.01" lengthAdjust="spacingAndGlyphs" fill="#262626" font-family='"Liberation Sans", sans-serif' font-style="normal" font-weight="normal" stroke="#262626" stroke-width="0.18">L</text>
<text x="819.37" y="315.70" font-size="12.61" textLength="10.50" lengthAdjust="spacingAndGlyphs" fill="#262626" font-family='"Liberation Sans", sans-serif' font-style="normal" font-weight="normal" stroke="#262626" stroke-width="0.18">M</text>
<text x="884.06" y="315.70" font-size="12.61" textLength="9.11" lengthAdjust="spacingAndGlyphs" fill="#262626" font-family='"Liberation Sans", sans-serif' font-style="normal" font-weight="normal" stroke="#262626" stroke-width="0.18">N</text>
<text x="947.71" y="315.70" font-size="12.61" textLength="9.81" lengthAdjust="spacingAndGlyphs" fill="#262626" font-family='"Liberation Sans", sans-serif' font-style="normal" font-weight="normal" stroke="#262626" stroke-width="0.18">O</text>
<text x="1012.22" y="315.70" font-size="12.61" textLength="8.41" lengthAdjust="spacingAndGlyphs" fill="#262626" font-family='"Liberation Sans", sans-serif' font-style="normal" font-weight="normal" stroke="#262626" stroke-width="0.18">P</text>
<text x="1075.71" y="315.70" font-size="12.61" textLength="9.81" lengthAdjust="spacingAndGlyphs" fill="#262626" font-family='"Liberation Sans", sans-serif' font-style="normal" font-weight="normal" stroke="#262626" stroke-width="0.18">Q</text>
<text x="8.07" y="337.00" font-size="13.48" textLength="6.90" lengthAdjust="spacingAndGlyphs" fill="#262626" font-family='"Liberation Sans", sans-serif' font-style="normal" font-weight="normal" stroke="#262626" stroke-width="0.18">1</text>
<text x="8.26" y="357.00" font-size="13.48" textLength="6.90" lengthAdjust="spacingAndGlyphs" fill="#262626" font-family='"Liberation Sans", sans-serif' font-style="normal" font-weight="normal" stroke="#262626" stroke-width="0.18">2</text>
<text x="8.26" y="377.00" font-size="13.48" textLength="6.90" lengthAdjust="spacingAndGlyphs" fill="#262626" font-family='"Liberation Sans", sans-serif' font-style="normal" font-weight="normal" stroke="#262626" stroke-width="0.18">3</text>
<text x="8.32" y="397.00" font-size="13.48" textLength="6.90" lengthAdjust="spacingAndGlyphs" fill="#262626" font-family='"Liberation Sans", sans-serif' font-style="normal" font-weight="normal" stroke="#262626" stroke-width="0.18">4</text>
<text x="8.26" y="417.00" font-size="13.48" textLength="6.90" lengthAdjust="spacingAndGlyphs" fill="#262626" font-family='"Liberation Sans", sans-serif' font-style="normal" font-weight="normal" stroke="#262626" stroke-width="0.18">5</text>
<text x="8.20" y="437.00" font-size="13.48" textLength="6.90" lengthAdjust="spacingAndGlyphs" fill="#262626" font-family='"Liberation Sans", sans-serif' font-style="normal" font-weight="normal" stroke="#262626" stroke-width="0.18">6</text>
<text x="8.26" y="457.00" font-size="13.48" textLength="6.90" lengthAdjust="spacingAndGlyphs" fill="#262626" font-family='"Liberation Sans", sans-serif' font-style="normal" font-weight="normal" stroke="#262626" stroke-width="0.18">7</text>
<text x="8.23" y="477.00" font-size="13.48" textLength="6.90" lengthAdjust="spacingAndGlyphs" fill="#262626" font-family='"Liberation Sans", sans-serif' font-style="normal" font-weight="normal" stroke="#262626" stroke-width="0.18">8</text>
<text x="8.26" y="497.00" font-size="13.48" textLength="6.90" lengthAdjust="spacingAndGlyphs" fill="#262626" font-family='"Liberation Sans", sans-serif' font-style="normal" font-weight="normal" stroke="#262626" stroke-width="0.18">9</text>
<text x="4.57" y="517.00" font-size="13.48" textLength="13.79" lengthAdjust="spacingAndGlyphs" fill="#262626" font-family='"Liberation Sans", sans-serif' font-style="normal" font-weight="normal" stroke="#262626" stroke-width="0.18">10</text>
<text x="5.10" y="537.00" font-size="13.48" textLength="12.87" lengthAdjust="spacingAndGlyphs" fill="#262626" font-family='"Liberation Sans", sans-serif' font-style="normal" font-weight="normal" stroke="#262626" stroke-width="0.18">11</text>
<text x="4.66" y="557.00" font-size="13.48" textLength="13.79" lengthAdjust="spacingAndGlyphs" fill="#262626" font-family='"Liberation Sans", sans-serif' font-style="normal" font-weight="normal" stroke="#262626" stroke-width="0.18">12</text>
<text x="4.60" y="577.00" font-size="13.48" textLength="13.79" lengthAdjust="spacingAndGlyphs" fill="#262626" font-family='"Liberation Sans", sans-serif' font-style="normal" font-weight="normal" stroke="#262626" stroke-width="0.18">13</text>
<text x="4.54" y="597.00" font-size="13.48" textLength="13.79" lengthAdjust="spacingAndGlyphs" fill="#262626" font-family='"Liberation Sans", sans-serif' font-style="normal" font-weight="normal" stroke="#262626" stroke-width="0.18">14</text>
<text x="4.60" y="617.00" font-size="13.48" textLength="13.79" lengthAdjust="spacingAndGlyphs" fill="#262626" font-family='"Liberation Sans", sans-serif' font-style="normal" font-weight="normal" stroke="#262626" stroke-width="0.18">15</text>
<text x="4.60" y="637.00" font-size="13.48" textLength="13.79" lengthAdjust="spacingAndGlyphs" fill="#262626" font-family='"Liberation Sans", sans-serif' font-style="normal" font-weight="normal" stroke="#262626" stroke-width="0.18">16</text>
<text x="4.66" y="657.00" font-size="13.48" textLength="13.79" lengthAdjust="spacingAndGlyphs" fill="#262626" font-family='"Liberation Sans", sans-serif' font-style="normal" font-weight="normal" stroke="#262626" stroke-width="0.18">17</text>
<text x="4.60" y="677.00" font-size="13.48" textLength="13.79" lengthAdjust="spacingAndGlyphs" fill="#262626" font-family='"Liberation Sans", sans-serif' font-style="normal" font-weight="normal" stroke="#262626" stroke-width="0.18">18</text>
<text x="4.63" y="697.00" font-size="13.48" textLength="13.79" lengthAdjust="spacingAndGlyphs" fill="#262626" font-family='"Liberation Sans", sans-serif' font-style="normal" font-weight="normal" stroke="#262626" stroke-width="0.18">19</text>
<rect x="31" y="414" width="174" height="26" fill="#696969"/>
<rect x="31" y="414" width="173" height="25" fill="#A0A0A0"/>
<rect x="31" y="414" width="172" height="24" fill="#FFFFFF"/>
<rect x="32" y="415" width="171" height="23" fill="#F0F0F0"/>
<text x="71.69" y="432.40" font-size="14.78" textLength="92.19" lengthAdjust="spacingAndGlyphs" fill="#1E1414" font-family='"Liberation Sans", sans-serif' font-style="normal" font-weight="normal" stroke="#1E1414" stroke-width="0.18">Run Epicor BAQ</text>
<path d="M109 706 Q115 706 115 712 L115 728 Q115 734 121 734 L166 734 Q172 734 172 728 L172 712 Q172 706 178 706 Z" fill="#FFFFFF"/>
<path d="M108.5 706.5 Q114.5 706.5 114.5 712.5 L114.5 728 Q114.5 734.5 121 734.5 L166 734.5 Q172.5 734.5 172.5 728 L172.5 712.5 Q172.5 706.5 178.5 706.5" fill="none" stroke="#E2E2E2" stroke-width="1"/>
<text x="122.81" y="724.00" font-size="13.91" textLength="41.78" lengthAdjust="spacingAndGlyphs" fill="#1E1E1E" font-family='"Liberation Sans", sans-serif' font-style="normal" font-weight="normal" stroke="#1E1E1E" stroke-width="0.6">Sheet1</text>
<rect x="123" y="729" width="41" height="2.5" rx="1" fill="#107C41"/>
<rect x="176" y="713" width="1" height="18" fill="#C8C8C8"/>
<text x="10.84" y="752.70" font-size="11.01" textLength="31.17" lengthAdjust="spacingAndGlyphs" fill="#262626" font-family='"Liberation Sans", sans-serif' font-style="normal" font-weight="normal" stroke="#262626" stroke-width="0.18">Ready</text>
<text x="111.40" y="753.10" font-size="11.88" textLength="126.56" lengthAdjust="spacingAndGlyphs" fill="#262626" font-family='"Liberation Sans", sans-serif' font-style="normal" font-weight="normal" stroke="#262626" stroke-width="0.18">Accessibility: Good to go</text>
</svg>
</body></html>
